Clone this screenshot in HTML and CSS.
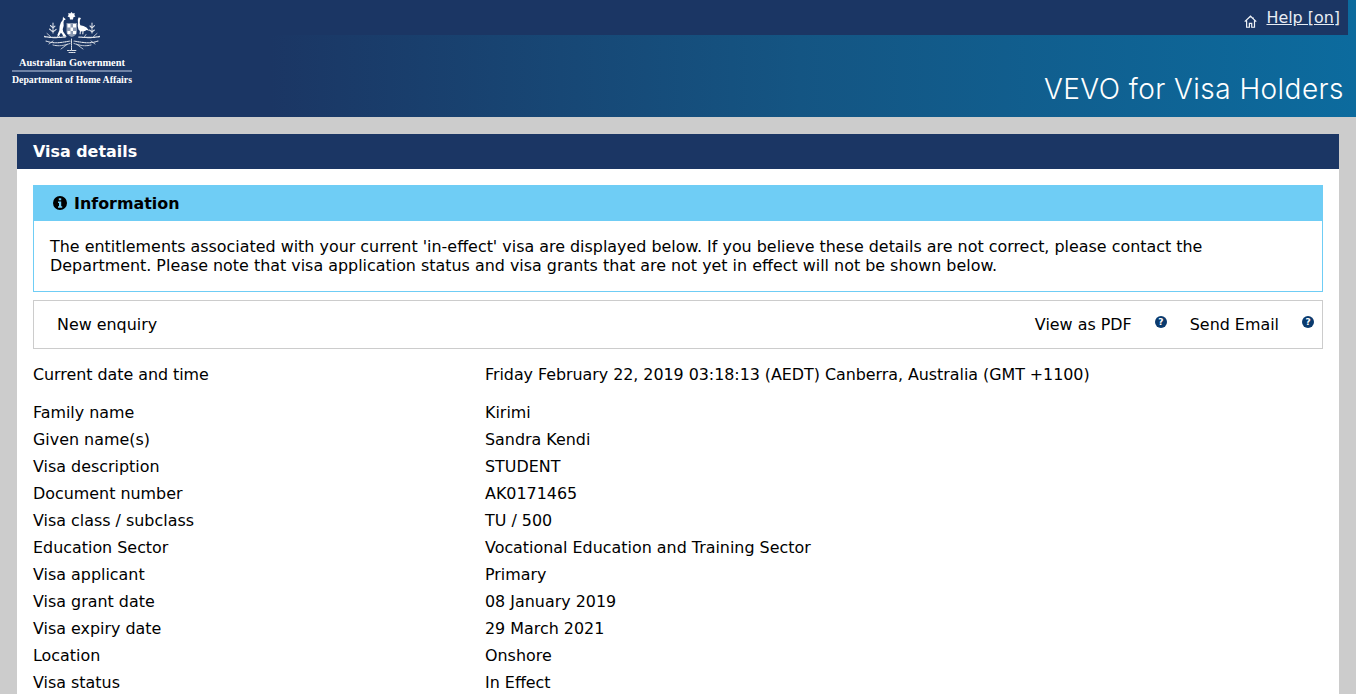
FILE: index.html
```html
<!DOCTYPE html>
<html lang="en">
<head>
	<meta charset="UTF-8">
	<title>VEVO for Visa Holders</title>
	<link rel="stylesheet" href="styles.css">
</head>
<body>
	<div class="header">
		<div class="logo">
			<svg class="crest" width="56" height="41" viewBox="0 0 56 41">
				<g fill="#fff">
					<!-- crown star -->
					<path d="M27.500 0l1.300 1.500 1.900-.5-.3 2 1 1.500-2 .7-.4 2.300h-3l-.4-2.300-2-.7 1-1.500-.3-2 1.900.5z"/>
					<!-- kangaroo -->
					<path d="M19 4.500l.8 1.300 1.500 1 .2 1-1.500.5-.5 2 .2 3.500-1 3.500 .5 2.500 2.500 3.500 1 1.500-3.500-.3-1-2.500-1.300-1.300-1.500 2.500-2.200 2.300.8-4 1.300-3 .4-4.500 1.200-3.500 1.800-2.500z"/>
					<!-- emu -->
					<path d="M34.500 5.500l1.800.3.700 1.200-1 .6-.3 3.400.6 2.300 3.200.6 3 1.600 2.800 3.200-2.700-.7-1.700 1-1.400.3-.2 3-1 0 .2-3-1.700.2-.2 2.800-1 0 .3-3.300-1.400-1.600-.8-3.400.3-3.500-.2-2.700z"/>
					<!-- shield -->
					<path d="M22.500 11h10.500v9c0 2.500-2.500 4-5.200 5-2.800-1-5.300-2.500-5.300-5z" opacity=".5"/>
					<path d="M23.500 12h3v3.500h-3zM29 12h3v3.500h-3zM26.500 15.500h2.500v3.500h-2.500zM23.500 19h3v3h-3zM29 19h3v3h-3z"/>
				</g>
				<g fill="none" stroke="#fff" stroke-linecap="round" opacity=".85">
					<!-- wattle either side -->
					<path d="M9 11v10M6.500 13.500L9 16l2.500-2.500M5.500 17L9 20l3.500-3" stroke-width="1.100" stroke-dasharray="1.500 .9"/>
					<path d="M48 11v10M46 14l2 2 2.500-2.500M45.500 18l2.500 2 3-2.500" stroke-width="1.100" stroke-dasharray="1.500 .9"/>
					<!-- wreath -->
					<path d="M.5 24.500c7 1.500 14 1 21.500 .5M55.500 24.500c-7 1.500-14 1-21.500 .5" stroke-width="1.300" stroke-dasharray="1.600 .8"/>
					<path d="M2 29c8 3 16 1.500 24 0M54 29c-8 3-16 1.500-24 0" stroke-width="1.100" stroke-dasharray="1.400 1"/>
					<path d="M9 33c6 1.500 11 .5 17-1.500M47 33c-6 1.500-11 .5-17-1.500" stroke-width="1" stroke-dasharray="1.300 1"/>
					<path d="M3 21.500l3.500 3M53 21.500l-3.500 3M14 22.500l2 3M42 22.500l-2 3M5 32l4-3M51 32l-4-3M17 37l6-4.500M39 37l-6-4.500" stroke-width=".8"/>
					<path d="M23.500 38.500h9M25 40.500h6M27.500 27v11" stroke-width="1" stroke-dasharray="1.500 .8"/>
				</g>
			</svg>
			<div class="gov">Australian Government</div>
			<div class="dept">Department of Home Affairs</div>
		</div>
		<div class="header-main">
			<div class="topbar">
				<svg class="home-icon" width="13" height="13" viewBox="0 0 14 14">
					<path d="M.8 7.200L7 1.300l6.200 5.900M10 2.600v2M2.800 6v7.200h3V9h2.500v4.200h3V6" fill="none" stroke="#f0f3f7" stroke-width="1.300"/>
				</svg>
				<a class="help" href="#">Help [on]</a>
			</div>
			<div class="app-title">VEVO for Visa Holders</div>
		</div>
	</div>

	<div class="panel">
		<div class="panel-title">Visa details</div>
		<div class="panel-body">
			<div class="info">
				<div class="info-head">
					<svg width="14" height="14" viewBox="0 0 14 14">
						<path fill-rule="evenodd" d="M7 0a7 7 0 1 0 0 14A7 7 0 0 0 7 0zM5.800 2.300h2.400v2H5.800zM5 5.600h3.200v4.600H9.200v1.500H5v-1.500h1V7.100H5z"/>
					</svg>
					Information
				</div>
				<div class="info-text">The entitlements associated with your current 'in-effect' visa are displayed below. If you believe these details are not correct, please contact the Department. Please note that visa application status and visa grants that are not yet in effect will not be shown below.</div>
			</div>

			<div class="toolbar">
				<span class="new">New enquiry</span>
				<span class="tool">View as PDF</span>
				<span class="q">?</span>
				<span class="tool email">Send Email</span>
				<span class="q">?</span>
			</div>

			<div class="row now"><div>Current date and time</div><div>Friday February 22, 2019 03:18:13 (AEDT) Canberra, Australia (GMT +1100)</div></div>

			<div class="details">
				<div class="row"><div>Family name</div><div>Kirimi</div></div>
				<div class="row"><div>Given name(s)</div><div>Sandra Kendi</div></div>
				<div class="row"><div>Visa description</div><div>STUDENT</div></div>
				<div class="row"><div>Document number</div><div>AK0171465</div></div>
				<div class="row"><div>Visa class / subclass</div><div>TU / 500</div></div>
				<div class="row"><div>Education Sector</div><div>Vocational Education and Training Sector</div></div>
				<div class="row"><div>Visa applicant</div><div>Primary</div></div>
				<div class="row"><div>Visa grant date</div><div>08 January 2019</div></div>
				<div class="row"><div>Visa expiry date</div><div>29 March 2021</div></div>
				<div class="row"><div>Location</div><div>Onshore</div></div>
				<div class="row"><div>Visa status</div><div>In Effect</div></div>
			</div>
		</div>
	</div>
</body>
</html>
```

FILE: styles.css
```css
* {
	box-sizing: border-box;
}

html {
	overflow: hidden;
}

body {
	margin: 0;
	background-color: #ccc;
	color: #000;
	font-family: "DejaVu Sans", sans-serif;
	font-size: 15.92px;
}

.header {
	display: flex;
	height: 117px;
	background: linear-gradient(to right, #1b3664 0, #1b3664 270px, #145583 800px, #0c6b9e 1356px);
}

.logo {
	width: 144px;
	padding: 12px 0 0 12px;
	color: #fff;
	font-family: "Liberation Serif", serif;
	font-weight: bold;
}

.crest {
	display: block;
	margin-left: 32px;
}

.gov {
	width: 120px;
	margin-top: 4px;
	padding-bottom: 1px;
	border-bottom: 2px solid #6f83a6;
	text-align: center;
	font-size: 10.4px;
	line-height: 12px;
}

.dept {
	width: 120px;
	margin-top: 2px;
	font-size: 9.8px;
	line-height: 12px;
	white-space: nowrap;
}

.header-main {
	flex: 1;
}

.topbar {
	display: flex;
	justify-content: flex-end;
	align-items: flex-start;
	height: 35px;
	margin-right: 8px;
	padding: 8px 8px 0 0;
	background-color: #1b3664;
}

.home-icon {
	margin: 7px 9px 0 0;
}

.help {
	color: #e8edf4;
}

.app-title {
	margin-top: 36px;
	padding-right: 12px;
	text-align: right;
	color: #fff;
	font-family: Inter, sans-serif;
	font-weight: 300;
	font-size: 28px;
	letter-spacing: .45px;
	line-height: 36px;
}

.panel {
	margin: 17px 17px 0;
	background-color: #fff;
}

.panel-title {
	height: 35px;
	padding-left: 16px;
	background-color: #1b3664;
	color: #fff;
	font-weight: bold;
	line-height: 35px;
}

.panel-body {
	padding: 16px;
}

.info {
	border: 1px solid #6fcdf5;
	border-top: 0;
}

.info-head {
	display: flex;
	align-items: center;
	gap: 7px;
	height: 36px;
	margin: 0 -1px;
	padding-left: 20px;
	background-color: #6fcdf5;
	font-weight: bold;
}

.info-text {
	padding: 16px;
	line-height: 19px;
}

.toolbar {
	display: flex;
	align-items: center;
	height: 49px;
	margin-top: 8px;
	padding: 0 8px 0 23px;
	border: 1px solid #ccc;
}

.new {
	margin-right: auto;
}

.q {
	width: 12px;
	height: 12px;
	margin: -5px 0 0 23px;
	border-radius: 50%;
	background-color: #0a3a6e;
	color: #fff;
	font-size: 9px;
	font-weight: bold;
	line-height: 12px;
	text-align: center;
}

.email {
	margin-left: 23px;
}

.row {
	display: grid;
	grid-template-columns: 452px 1fr;
	height: 27px;
	line-height: 27px;
}

.now {
	margin-top: 12px;
	letter-spacing: -.04px;
}

.details {
	margin-top: 11px;
}
```
